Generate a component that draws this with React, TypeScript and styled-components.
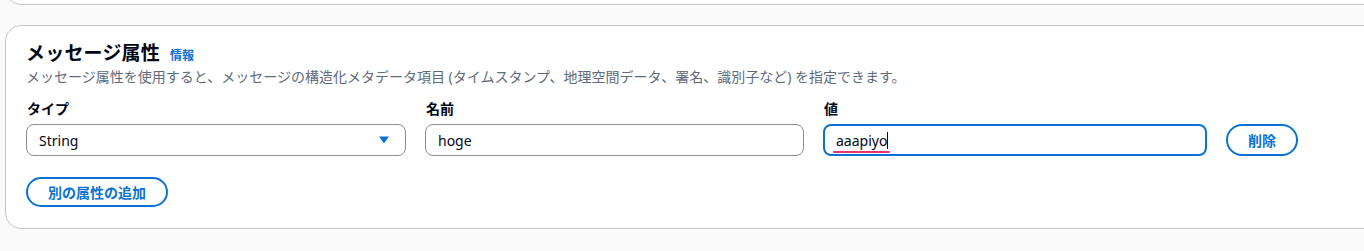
import React from 'react';
import styled, { createGlobalStyle } from 'styled-components';

const GlobalStyle = createGlobalStyle`
  html, body {
    margin: 0;
    padding: 0;
    background: #fafafa;
    overflow: hidden;
  }
  body {
    font-family: 'Noto Sans', 'Noto Sans CJK JP', sans-serif;
    color: #000716;
  }
`;

const Page = styled.div`
  padding-left: 5px;
  width: calc(100% + 30px);
  box-sizing: border-box;
`;

const PrevCard = styled.div`
  height: 20px;
  margin-top: -17px;
  background: #ffffff;
  border: 1px solid #c6c6cd;
  border-radius: 0 0 16px 16px;
`;

const Card = styled.section`
  margin-top: 20px;
  background: #ffffff;
  border: 1px solid #c6c6cd;
  border-radius: 16px;
  padding: 16px 20px 21px 20px;
`;

const TitleRow = styled.div`
  display: flex;
  align-items: baseline;
  gap: 10px;
  line-height: 22px;
`;

const Title = styled.h2`
  margin: 0;
  font-size: 19px;
  font-weight: 700;
  color: #000716;
  letter-spacing: 0.2px;
`;

const InfoLink = styled.a`
  font-size: 12px;
  font-weight: 700;
  color: #0972d3;
  text-decoration: none;
  cursor: pointer;
`;

const Description = styled.p`
  margin: 0;
  font-size: 14px;
  line-height: 20px;
  color: #5f6b7a;
`;

const FieldGrid = styled.div`
  margin-top: 11px;
  display: grid;
  grid-template-columns: 380px 379px 384px auto;
  column-gap: 19px;
  row-gap: 4px;
  align-items: center;
`;

const Label = styled.label`
  font-size: 14px;
  font-weight: 700;
  line-height: 22px;
  color: #000716;
  padding-left: 1px;
`;

const fieldBase = `
  box-sizing: border-box;
  height: 32px;
  width: 100%;
  border-radius: 8px;
  background: #ffffff;
  font-family: 'Noto Sans', 'Noto Sans CJK JP', sans-serif;
  font-size: 14px;
  color: #000716;
  display: flex;
  align-items: center;
`;

const SelectBox = styled.div`
  ${fieldBase}
  border: 1px solid #8c8c94;
  padding: 0 16px 0 12px;
  justify-content: space-between;
  cursor: pointer;
`;

const TextInput = styled.input`
  ${fieldBase}
  border: 1px solid #8c8c94;
  padding: 0 12px;
  outline: none;
`;

const FocusedField = styled.div`
  ${fieldBase}
  border: 2px solid #0972d3;
  padding: 0 11px;
`;

const Typed = styled.span`
  position: relative;
  &::after {
    content: '';
    position: absolute;
    left: -3px;
    right: -3px;
    bottom: -3px;
    height: 2px;
    border-radius: 1px;
    background: #e5336c;
  }
`;

const Caret = styled.span`
  display: inline-block;
  width: 1px;
  height: 17px;
  background: #000716;
`;

const PillButton = styled.button<{ $compact?: boolean }>`
  box-sizing: border-box;
  height: ${p => (p.$compact ? 30 : 32)}px;
  padding: 0 20px;
  border: 2px solid #0972d3;
  border-radius: 20px;
  background: #ffffff;
  color: #0972d3;
  font-family: 'Noto Sans', 'Noto Sans CJK JP', sans-serif;
  font-size: 14px;
  font-weight: 700;
  cursor: pointer;
  justify-self: start;
  white-space: nowrap;
`;

const AddRow = styled.div`
  margin-top: 21px;
  display: flex;
`;

const CaretDown = () => (
  <svg width="10" height="8" viewBox="0 0 10 8" aria-hidden="true">
    <path d="M0 0.5 L10 0.5 L5 7.5 Z" fill="#0972d3" />
  </svg>
);

export default function App() {
  return (
    <>
      <GlobalStyle />
      <Page>
        <PrevCard />
        <Card>
          <TitleRow>
            <Title>メッセージ属性</Title>
            <InfoLink>情報</InfoLink>
          </TitleRow>
          <Description>
            メッセージ属性を使用すると、メッセージの構造化メタデータ項目 (タイムスタンプ、地理空間データ、署名、識別子など) を指定できます。
          </Description>
          <FieldGrid>
            <Label>タイプ</Label>
            <Label>名前</Label>
            <Label>値</Label>
            <span />
            <SelectBox>
              <span>String</span>
              <CaretDown />
            </SelectBox>
            <TextInput defaultValue="hoge" />
            <FocusedField>
              <Typed>aaapiyo</Typed>
              <Caret />
            </FocusedField>
            <PillButton>削除</PillButton>
          </FieldGrid>
          <AddRow>
            <PillButton $compact>別の属性の追加</PillButton>
          </AddRow>
        </Card>
      </Page>
    </>
  );
}
